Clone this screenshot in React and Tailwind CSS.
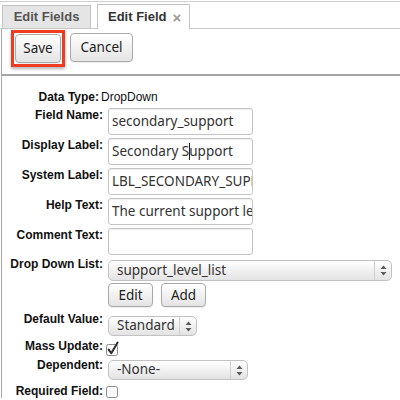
import React from 'react'

const label = "w-[101px] shrink-0 text-right text-[12px] leading-[14px] font-bold text-[#111]"
const btn = "flex items-center justify-center rounded-[4px] border border-[#a9a9a9] bg-linear-to-b from-white to-[#e4e4e4] font-['Noto_Sans',sans-serif] text-[13.5px] text-[#222] shadow-[0_1px_1px_rgba(0,0,0,0.08)]"
const box = "ml-[5px] flex h-[27px] w-[145px] items-center overflow-hidden whitespace-nowrap rounded-[3px] border border-[#c4c4c4] pl-[3px] font-['Noto_Sans',sans-serif] text-[13.5px] text-[#333] shadow-[inset_0_1px_1px_rgba(0,0,0,0.07)]"
const sel = "ml-[5px] flex items-center rounded-[5px] border border-[#c2c2c2] bg-linear-to-b from-white to-[#e3e3e3] font-['Noto_Sans',sans-serif] text-[13.5px] text-[#333]"

function Arrows() {
  return (
    <svg width="7" height="11" viewBox="0 0 7 11">
      <polygon points="3.5,0.5 6.5,4 0.5,4" fill="#5a5a5a" />
      <polygon points="0.5,7 6.5,7 3.5,10.5" fill="#5a5a5a" />
    </svg>
  )
}

function Select({ className, children }) {
  return (
    <div className={`${sel} ${className}`}>
      <span className="flex-1 pl-[8px] leading-none">{children}</span>
      <span className="flex h-full w-[17px] items-center justify-center border-l border-[#cfcfcf]">
        <Arrows />
      </span>
    </div>
  )
}

function Row({ name, className, children }) {
  return (
    <div className={`flex items-start ${className}`}>
      <div className={label}>{name}</div>
      {children}
    </div>
  )
}

export default function App() {
  return (
    <div className="h-[400px] w-[400px] overflow-hidden bg-white pt-px font-['Liberation_Sans',Arial,sans-serif]">
      <div className="border-t border-[#cfcfcf]">
        {/* tabs */}
        <div className="flex h-[27px] items-end gap-[6px] border-b border-[#c8c8c8] pl-[2px]">
          <div className="flex h-[23px] w-[89px] items-center justify-center border border-b-0 border-[#c4c4c4] bg-[#e5e5e5] text-[13px] font-bold text-[#555]">
            Edit Fields
          </div>
          <div className="-mb-px flex h-[25px] w-[93px] items-center border border-b-0 border-[#c4c4c4] bg-white pl-[10px] text-[13px] font-bold text-[#333]">
            Edit Field<span className="ml-[6px] text-[15px] leading-none text-[#9a9a9a]">×</span>
          </div>
        </div>

        <div className="ml-px border-l border-[#a8a8a8]">
          {/* actions */}
          <div className="flex h-[47px] items-start border-b-2 border-[#a5a5a5] pl-[9px] pt-px">
            <div className="border-[3px] border-[#ef3b24] p-px shadow-[0_2px_3px_rgba(0,0,0,0.3)]">
              <button className={`${btn} h-[29px] w-[46px]`}>Save</button>
            </div>
            <button className={`${btn} ml-[5px] mt-[3px] h-[29px] w-[63px]`}>Cancel</button>
          </div>

          {/* form */}
          <div className="pt-[14px]">
            <div className="flex items-start">
              <div className="w-[97px] shrink-0 text-right text-[12px] leading-[14px] font-bold text-[#111]">Data Type:</div>
              <div className="ml-[2px] text-[12px] leading-[14px] text-[#111]">DropDown</div>
            </div>
            <Row name="Field Name:" className="mt-[4px]">
              <div className={box}>secondary_support</div>
            </Row>
            <Row name="Display Label:" className="mt-[3px]">
              <div className={box}>
                Secondary S<span className="-mr-px inline-block h-[17px] w-px bg-[#222]" />upport
              </div>
            </Row>
            <Row name="System Label:" className="mt-[3px]">
              <div className={box}>LBL_SECONDARY_SUPPORT</div>
            </Row>
            <Row name="Help Text:" className="mt-[3px]">
              <div className={box}>The current support level</div>
            </Row>
            <Row name="Comment Text:" className="mt-[3px]">
              <div className={box} />
            </Row>
            <Row name="Drop Down List:" className="mt-[2px]">
              <Select className="mt-[3px] h-[21px] w-[284px]">support_level_list</Select>
            </Row>
            <div className="mt-[2px] flex gap-[8px] pl-[106px]">
              <button className={`${btn} h-[24px] w-[45px]`}>Edit</button>
              <button className={`${btn} h-[24px] w-[45px]`}>Add</button>
            </div>
            <Row name="Default Value:" className="mt-[5px]">
              <Select className="mt-[4px] h-[20px] w-[89px]">Standard</Select>
            </Row>
            <Row name="Mass Update:" className="mt-[3px]">
              <svg className="ml-[2px] mt-[2px]" width="15" height="15" viewBox="0 0 15 15">
                <rect x="1.5" y="3.5" width="11" height="11" rx="2" fill="#fafafa" stroke="#8c8c8c" />
                <path d="M3.6 8.6 L6.3 12.2 L12.6 1.6" fill="none" stroke="#2e2e2e" strokeWidth="2" strokeLinecap="round" strokeLinejoin="round" />
              </svg>
            </Row>
            <Row name="Dependent:" className="mt-[2px]">
              <Select className="mt-[2px] h-[20px] w-[140px]">-None-</Select>
            </Row>
            <Row name="Required Field:" className="mt-[4px]">
              <svg className="ml-[3px] mt-[2px]" width="12" height="12" viewBox="0 0 12 12">
                <rect x="0.5" y="0.5" width="11" height="11" rx="2" fill="#fbfbfb" stroke="#8c8c8c" />
              </svg>
            </Row>
          </div>
        </div>
      </div>
    </div>
  )
}
